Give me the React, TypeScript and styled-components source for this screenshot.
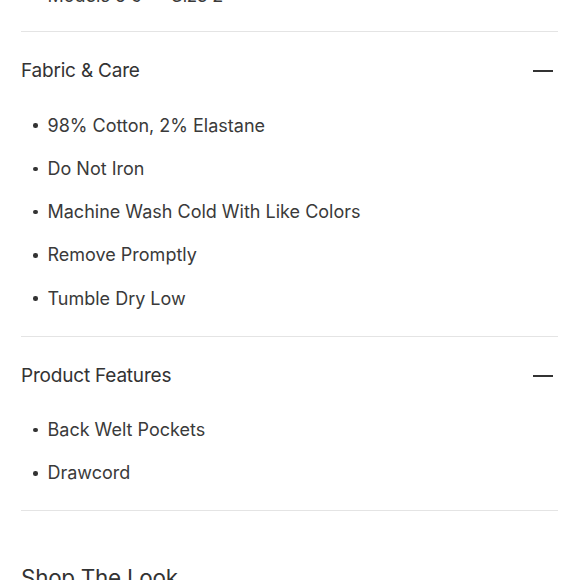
import styled, { createGlobalStyle } from 'styled-components';

const GlobalStyle = createGlobalStyle`
  html, body {
    margin: 0;
    padding: 0;
    background: #ffffff;
  }
  body {
    font-family: Inter, "Liberation Sans", sans-serif;
    color: #333333;
    -webkit-font-smoothing: antialiased;
  }
`;

const sections = [
  {
    title: 'Fabric & Care',
    items: [
      '98% Cotton, 2% Elastane',
      'Do Not Iron',
      'Machine Wash Cold With Like Colors',
      'Remove Promptly',
      'Tumble Dry Low',
    ],
  },
  {
    title: 'Product Features',
    items: ['Back Welt Pockets', 'Drawcord'],
  },
];

function MinusIcon() {
  return (
    <svg width='20' height='2' viewBox='0 0 20 2' aria-hidden='true'>
      <rect x='0' y='0' width='20' height='2' fill='#333333' />
    </svg>
  );
}

function App() {
  return (
    <>
      <GlobalStyle />
      <Page>
        <BulletList $first>
          <Item>
            <Dot />
            Models 5'9" • Size 2
          </Item>
        </BulletList>

        {sections.map((section) => (
          <Section key={section.title}>
            <Header>
              <span>{section.title}</span>
              <ToggleButton type='button' aria-label='Collapse'>
                <MinusIcon />
              </ToggleButton>
            </Header>
            <BulletList>
              {section.items.map((item) => (
                <Item key={item}>
                  <Dot />
                  {item}
                </Item>
              ))}
            </BulletList>
          </Section>
        ))}

        <ShopTitle>Shop The Look</ShopTitle>
      </Page>
    </>
  );
}

export default App;

const Page = styled.div`
  margin-top: -16px;
  padding: 0 22px 0 21px;
`;

const Section = styled.section`
  border-top: 1px solid #e4e4e4;
  &:last-of-type {
    border-bottom: 1px solid #e4e4e4;
  }
`;

const Header = styled.div`
  display: flex;
  align-items: center;
  justify-content: space-between;
  padding-top: 28px;
  height: 22px;
  font-size: 19px;
  line-height: 22px;
  font-weight: 400;
  letter-spacing: -0.2px;
`;

const ToggleButton = styled.button`
  display: flex;
  align-items: center;
  padding: 0;
  margin-right: 5px;
  border: none;
  background: none;
  cursor: pointer;
`;

const BulletList = styled.ul<{ $first?: boolean }>`
  list-style: none;
  margin: 0;
  padding: ${(p) => (p.$first ? '0 0 23px' : '31.5px 0 25px')};
  display: flex;
  flex-direction: column;
  gap: 19.25px;
`;

const Item = styled.li`
  display: flex;
  align-items: center;
  height: 24px;
  font-size: 18px;
  line-height: 24px;
  color: #3a3a3a;
`;

const Dot = styled.span`
  width: 4.5px;
  height: 4.5px;
  border-radius: 50%;
  background: #333333;
  margin: 0 10px 0 12px;
  flex-shrink: 0;
`;

const ShopTitle = styled.h2`
  margin: 53px 0 0;
  font-size: 22.5px;
  line-height: 28px;
  font-weight: 400;
  letter-spacing: -0.3px;
`;
